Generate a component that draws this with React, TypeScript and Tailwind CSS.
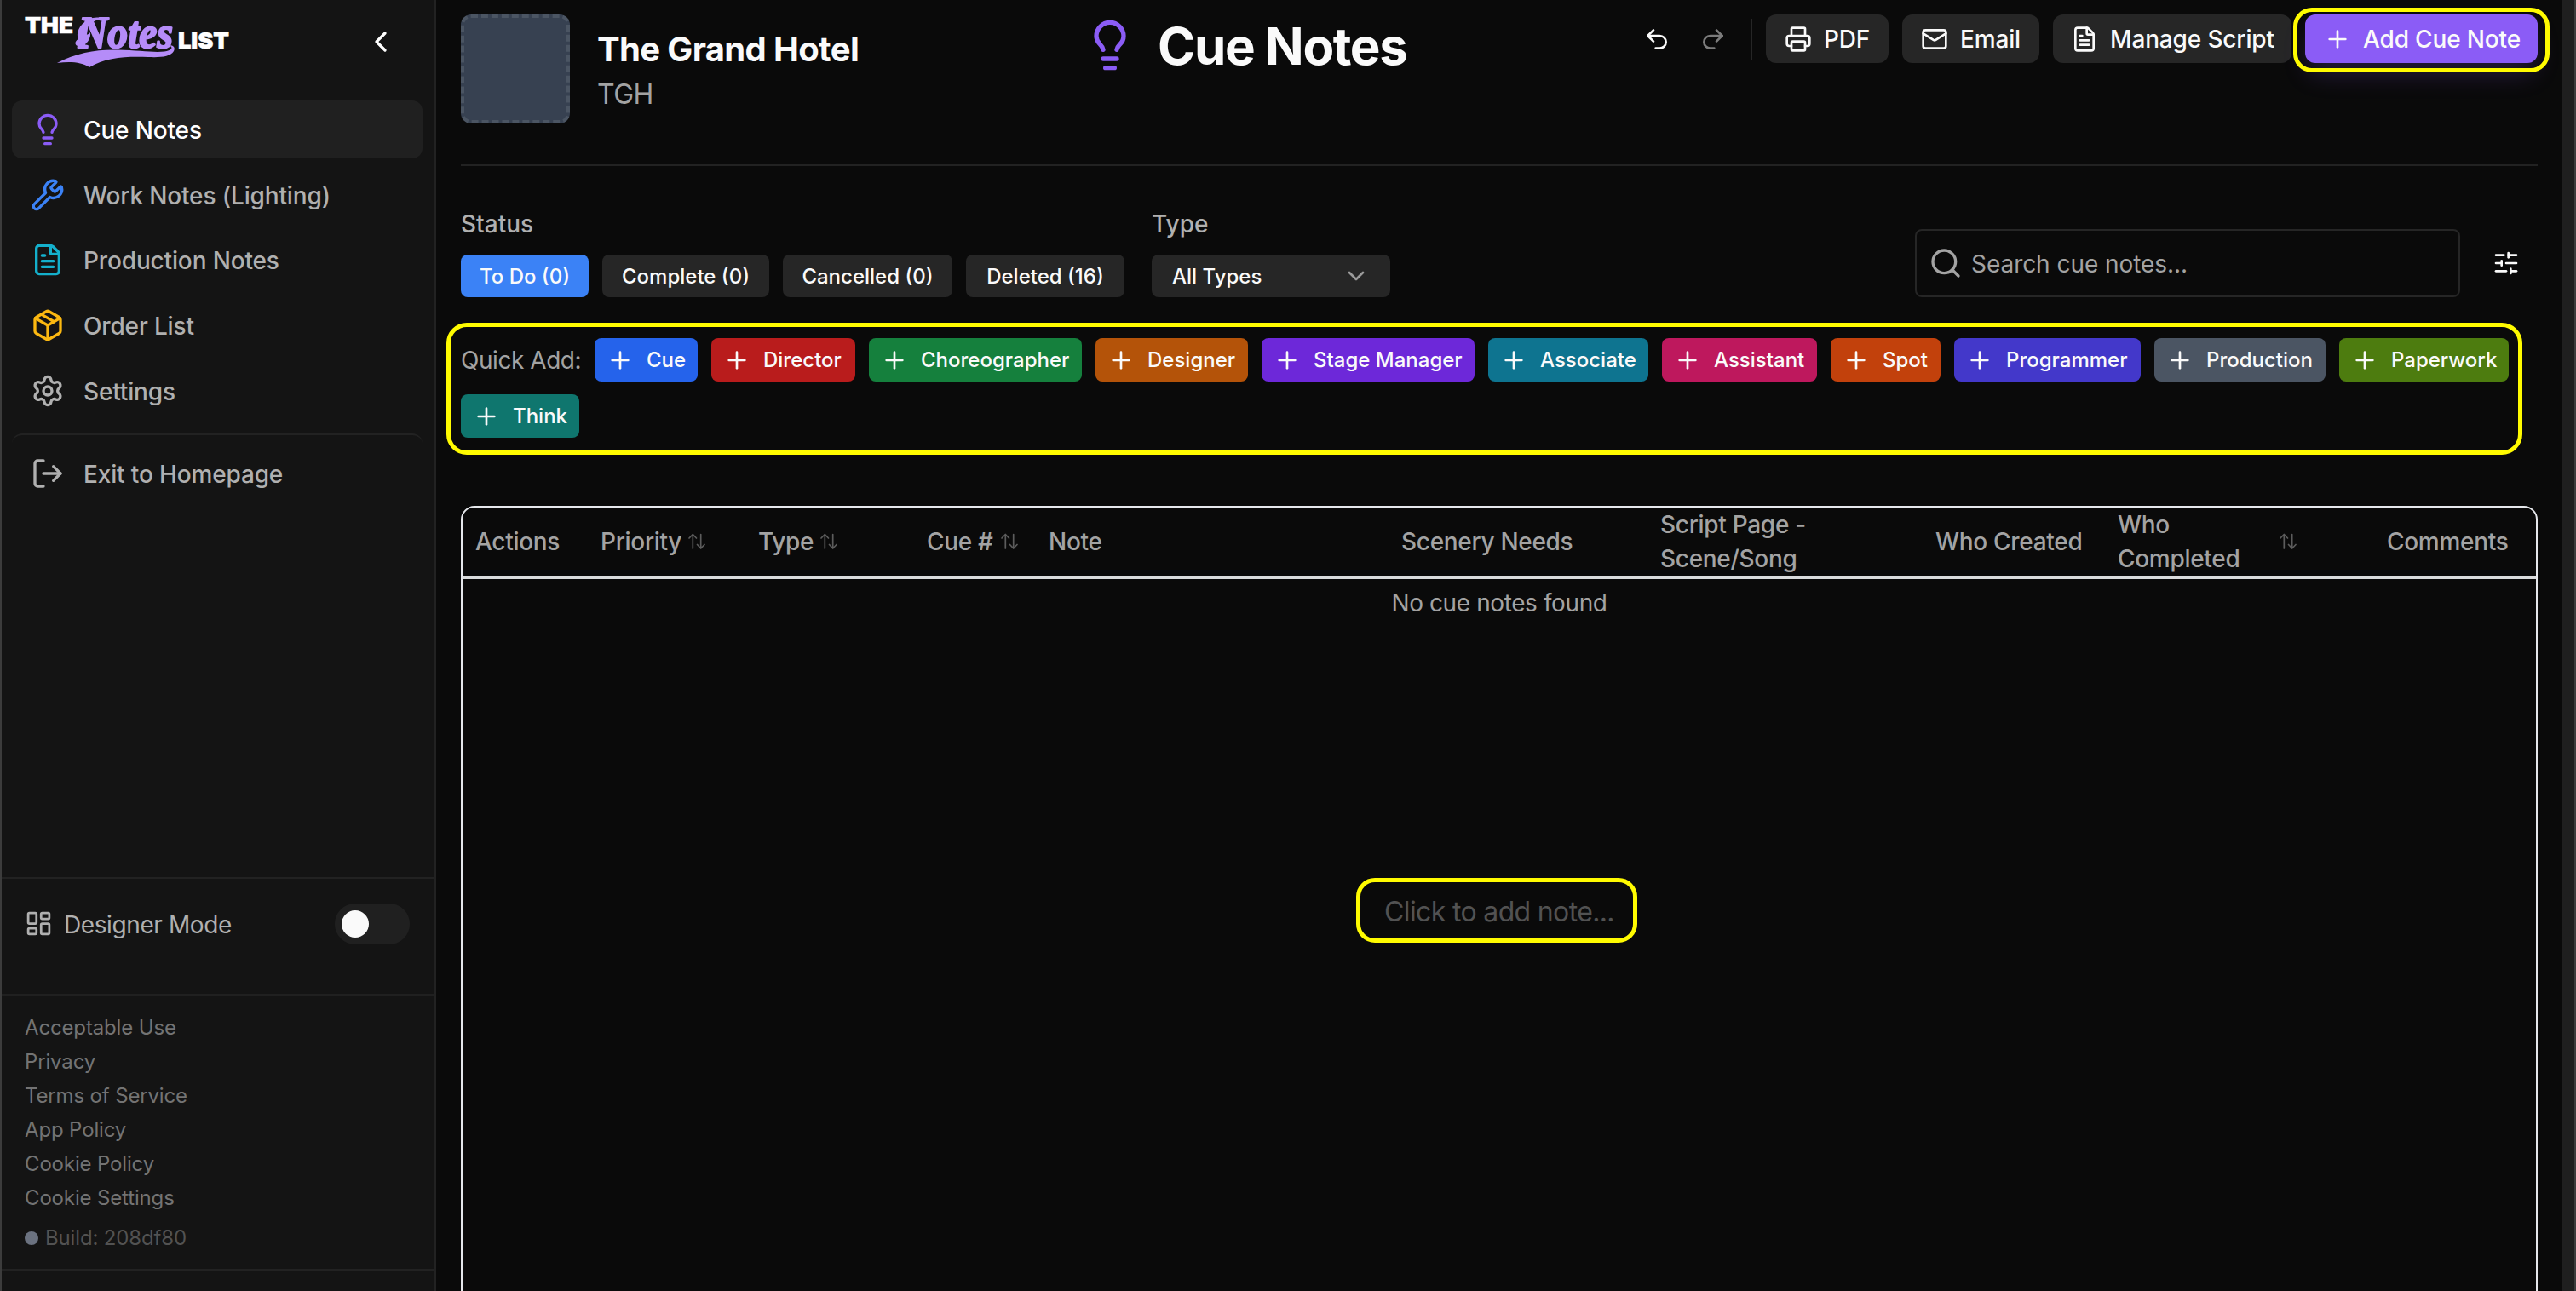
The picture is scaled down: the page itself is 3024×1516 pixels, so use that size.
import React from "react";
import {
  ChevronDown, ChevronLeft, FileText, LayoutDashboard, Lightbulb, LogOut, Mail, Package,
  Plus, Printer, Redo2, Search, Settings, SlidersHorizontal, Undo2, Wrench,
} from "lucide-react";

const nav = [
  { label: "Cue Notes", Icon: Lightbulb, color: "text-[#8b5cf6]", active: true },
  { label: "Work Notes (Lighting)", Icon: Wrench, color: "text-[#3b82f6]" },
  { label: "Production Notes", Icon: FileText, color: "text-[#14b0cc]" },
  { label: "Order List", Icon: Package, color: "text-[#fbb811]" },
  { label: "Settings", Icon: Settings, color: "text-[#b0b0b0]" },
];

const links = [
  "Acceptable Use",
  "Privacy",
  "Terms of Service",
  "App Policy",
  "Cookie Policy",
  "Cookie Settings",
];

const statuses = [
  { label: "To Do (0)", cls: "w-[150px] bg-[#3b82f6]" },
  { label: "Complete (0)", cls: "w-[196px] bg-[#262626]" },
  { label: "Cancelled (0)", cls: "w-[199px] bg-[#262626]" },
  { label: "Deleted (16)", cls: "w-[186px] bg-[#262626]" },
];

const quick = [
  { label: "Cue", cls: "w-[121px] bg-[#2563eb]" },
  { label: "Director", cls: "w-[169px] bg-[#b91c1c]" },
  { label: "Choreographer", cls: "w-[250px] bg-[#15803d]" },
  { label: "Designer", cls: "w-[179px] bg-[#b45309]" },
  { label: "Stage Manager", cls: "w-[250px] bg-[#6d28d9]" },
  { label: "Associate", cls: "w-[188px] bg-[#0e7490]" },
  { label: "Assistant", cls: "w-[182px] bg-[#be185d]" },
  { label: "Spot", cls: "w-[129px] bg-[#c2410c]" },
  { label: "Programmer", cls: "w-[219px] bg-[#4338ca]" },
  { label: "Production", cls: "w-[201px] bg-[#4b5563]" },
  { label: "Paperwork", cls: "w-[199px] bg-[#4d7c0f]" },
  { label: "Think", cls: "w-[139px] bg-[#0f766e]" },
];

function SortIcon() {
  return (
    <svg width="20" height="20" viewBox="0 0 20 20" fill="none" stroke="#5c5c5c" strokeWidth="1.7" strokeLinecap="round" strokeLinejoin="round">
      <path d="M5.300 18V1.500M1 6 5.300 1.500 9.500 6" />
      <path d="M14.700 1.500V18M10.500 13.500l4.200 4.500 4.300-4.500" />
    </svg>
  );
}

function Logo() {
  return (
    <svg width="244" height="68" viewBox="0 0 244 68" className="block overflow-visible">
      <g fill="#ffffff" stroke="#ffffff" strokeWidth="0.6" fontFamily="Inter, sans-serif" fontWeight="900" fontSize="26">
        <text x="1" y="24.500" textLength="57" lengthAdjust="spacingAndGlyphs">THE</text>
        <text x="181" y="43" textLength="60" lengthAdjust="spacingAndGlyphs">LIST</text>
      </g>
      <text x="64" y="42" textLength="111" lengthAdjust="spacingAndGlyphs" fill="#b58cf8" stroke="#b58cf8" strokeWidth="2.2" strokeLinejoin="round" fontFamily="'Liberation Serif', serif" fontStyle="italic" fontWeight="700" fontSize="52">Notes</text>
      <path d="M39 60C62 48 84 44 110 44.500C135 45 152 48 165 46.500C173 45.500 176 42 171 39.500C176 38.500 178 43 176 46C172 53 160 53.500 146 53C122 52 96 53 77 65C68 59 55 58 39 60Z" fill="#b58cf8" />
      <path d="M68 40C60 42 58 35 64 32C61 26 64 15 76 9C82 6 88 6 92 8C80 10 71 18 71 24C71 28 76 27 78 24C79 31 74 38 68 40Z" fill="#b58cf8" />
    </svg>
  );
}

const th = "flex items-center";

export default function App() {
  return (
    <div className="flex h-[1516px] w-[3024px] overflow-hidden bg-[#0a0a0a] font-['Inter','Noto_Sans',sans-serif] text-[28px] leading-[40px] text-[#fafafa]">
      <aside className="flex w-[512px] shrink-0 flex-col border-r-2 border-l-2 border-r-[#222222] border-l-[#3c3c3c] bg-[#141414]">
        <div className="flex h-[118px] items-start justify-between pt-[14px] pr-[43px] pl-[26px]">
          <Logo />
          <ChevronLeft size={40} className="mt-[15px] text-white" />
        </div>
        <nav className="flex flex-col gap-[8.700px] pr-[14px] pl-3 tracking-[-0.15px]">
          {nav.map(({ label, Icon, color, active }) => (
            <div key={label} className={active ? "flex h-[68px] items-center rounded-xl bg-[#202020] pl-[22px] text-white" : "flex h-[68px] items-center rounded-xl pl-[22px] text-[#b0b0b0]"}>
              <Icon size={40} className={color} />
              <span className="ml-[22px] pt-[2px] font-medium">{label}</span>
            </div>
          ))}
          <div className="mt-[8px] flex h-[92px] items-center rounded-xl border-t-2 border-[#222222] pl-[22px] text-[#b0b0b0]">
            <LogOut size={40} />
            <span className="ml-[22px] pt-[1px] font-medium">Exit to Homepage</span>
          </div>
        </nav>
        <div className="mt-auto flex h-[137px] items-start border-t-2 border-[#222222] pt-[29px] pr-[29px] pl-[27px] text-[#b0b0b0]">
          <LayoutDashboard size={33} className="mt-[7px]" />
          <span className="mt-[5px] ml-[13px] tracking-[-0.4px]">Designer Mode</span>
          <div className="ml-auto flex h-12 w-[88px] items-center rounded-full bg-[#202020] pl-2">
            <div className="size-8 rounded-full bg-[#fafafa]" />
          </div>
        </div>
        <div className="h-[323px] border-t-2 border-[#202020] pt-[18px] pl-[27px] text-[24px] tracking-[-0.15px] text-[#737373]">
          {links.map((label) => (
            <div key={label} className="h-10">{label}</div>
          ))}
          <div className="mt-[7px] flex items-center text-[#525252]">
            <div className="mr-[8px] size-4 rounded-full bg-[#6b7280]" />
            Build: 208df80
          </div>
        </div>
        <div className="h-[26px] shrink-0 border-t-2 border-[#222222]" />
      </aside>

      <main className="flex w-[2496px] shrink-0 flex-col pr-[29px] pl-[29px]">
        <header className="flex h-[195px] shrink-0 items-start border-b-2 border-[#222222] pt-[17px]">
          <div className="size-32 rounded-xl border-4 border-dashed border-[#4b5563] bg-[#374151]" />
          <div className="ml-[32px] w-[570px] pt-[17px]">
            <div className="text-[40px] leading-[48px] font-bold tracking-[-0.65px]">The Grand Hotel</div>
            <div className="mt-[5px] text-[32px] leading-[48px] tracking-[-0.5px] text-[#a3a3a3]">TGH</div>
          </div>
          <Lightbulb size={64} className="mt-[4px] text-[#8b5cf6]" />
          <h1 className="ml-[24px] pt-[1px] text-[60px] leading-[72px] font-bold tracking-[-1.4px]">Cue Notes</h1>
          <div className="ml-auto flex h-[57px] items-center font-medium tracking-[-0.15px]">
            <Undo2 size={32} />
            <Redo2 size={32} className="ml-[34px] text-[#7c7c7c]" />
            <div className="ml-[28px] h-12 w-[2px] bg-[#262626]" />
            <div className="ml-4 flex h-[57px] w-[144px] items-center rounded-xl bg-[#262626] pl-[22px]">
              <Printer size={32} /><span className="ml-[14px]">PDF</span>
            </div>
            <div className="ml-4 flex h-[57px] w-[161px] items-center rounded-xl bg-[#262626] pl-[22px]">
              <Mail size={32} /><span className="ml-[14px]">Email</span>
            </div>
            <div className="ml-4 flex h-[57px] w-[280px] items-center rounded-xl bg-[#262626] pl-[21px]">
              <FileText size={32} /><span className="ml-[14px]">Manage Script</span>
            </div>
            <div className="relative ml-4 flex h-[57px] w-[273px] items-center rounded-xl bg-[#8b5cf6] pl-[22px] shadow-[0_16px_30px_-4px_rgba(139,92,246,0.22)]">
              <Plus size={32} /><span className="ml-[14px]">Add Cue Note</span>
              <div className="absolute -inset-x-[14px] -top-[8px] -bottom-[11px] rounded-[22px] border-[5px] border-[#fffb00]" />
            </div>
          </div>
        </header>

        <section className="flex h-[184px] shrink-0 items-start text-[24px] font-medium">
          <div className="pt-[48px]">
            <div className="text-[28px] text-[#b0b0b0]">Status</div>
            <div className="mt-4 flex gap-4">
              {statuses.map((s) => (
                <div key={s.label} className={"flex h-[50px] items-center justify-center rounded-lg pt-[1px] " + s.cls}>{s.label}</div>
              ))}
            </div>
          </div>
          <div className="ml-8 pt-[48px]">
            <div className="text-[28px] text-[#b0b0b0]">Type</div>
            <div className="mt-4 flex h-[50px] w-[280px] items-center justify-between rounded-lg bg-[#262626] pr-6 pl-6">
              <span className="pt-[1px]">All Types</span>
              <ChevronDown size={32} className="text-[#9a9a9a]" />
            </div>
          </div>
          <div className="mt-[74px] ml-auto flex h-[80px] w-[640px] items-center rounded-lg border-2 border-[#262626] pl-[14px] text-[28px] font-normal text-[#a3a3a3]">
            <Search size={40} />
            <span className="ml-[10px] pt-[2px] tracking-[-0.05px]">Search cue notes...</span>
          </div>
          <SlidersHorizontal size={32} className="mt-[98px] mr-[21px] ml-[38px]" />
        </section>

        <section className="-ml-[17px] flex h-[155px] w-[2437px] shrink-0 flex-wrap content-start gap-x-4 gap-y-[15px] rounded-[24px] border-[5px] border-[#fffb00] pt-[13px] pl-3 text-[24px] font-medium">
          <div className="flex h-[51px] w-[141px] items-center text-[28px] font-normal tracking-[-0.45px] whitespace-nowrap text-[#a3a3a3]">Quick Add:</div>
          {quick.map((q) => (
            <div key={q.label} className={"flex h-[51px] items-center rounded-lg pl-[14px] whitespace-nowrap " + q.cls}>
              <Plus size={32} className="shrink-0" />
              <span className="ml-[15px]">{q.label}</span>
            </div>
          ))}
        </section>

        <section className="mt-[60px] flex h-[940px] shrink-0 flex-col rounded-2xl border-2 border-[#e5e7eb]">
          <div className="flex h-[84px] shrink-0 items-center border-b-4 border-[#d9dbdc] pl-[15px] font-medium tracking-[-0.3px] whitespace-nowrap text-[#a3a3a3]">
            <div className={th + " w-[147px]"}>Actions</div>
            <div className={th + " w-[185px] gap-[8px]"}>Priority <SortIcon /></div>
            <div className={th + " w-[198px] gap-[8px]"}>Type <SortIcon /></div>
            <div className={th + " w-[143px] gap-[9px]"}>Cue # <SortIcon /></div>
            <div className={th + " w-[414px]"}>Note</div>
            <div className={th + " w-[304px]"}>Scenery Needs</div>
            <div className={th + " w-[323px]"}>Script Page -<br />Scene/Song</div>
            <div className={th + " w-[214px]"}>Who Created</div>
            <div className={th + " w-[190px]"}>Who<br />Completed</div>
            <div className={th + " w-[126px]"}><SortIcon /></div>
            <div className={th}>Comments</div>
          </div>
          <div className="pt-[8px] text-center tracking-[-0.4px] text-[#a3a3a3]">No cue notes found</div>
          <div className="mt-[303px] ml-[1049px] flex h-[76px] w-[330px] items-center justify-center rounded-[22px] border-[5px] border-[#fffb00] pt-[3px] pl-[6px] text-[32px] tracking-[-0.65px] text-[#525252]">
            Click to add note...
          </div>
        </section>
      </main>
      <div className="w-4 shrink-0 border-r-2 border-[#3c3c3c] bg-[#1f1f1f]" />
    </div>
  );
}
